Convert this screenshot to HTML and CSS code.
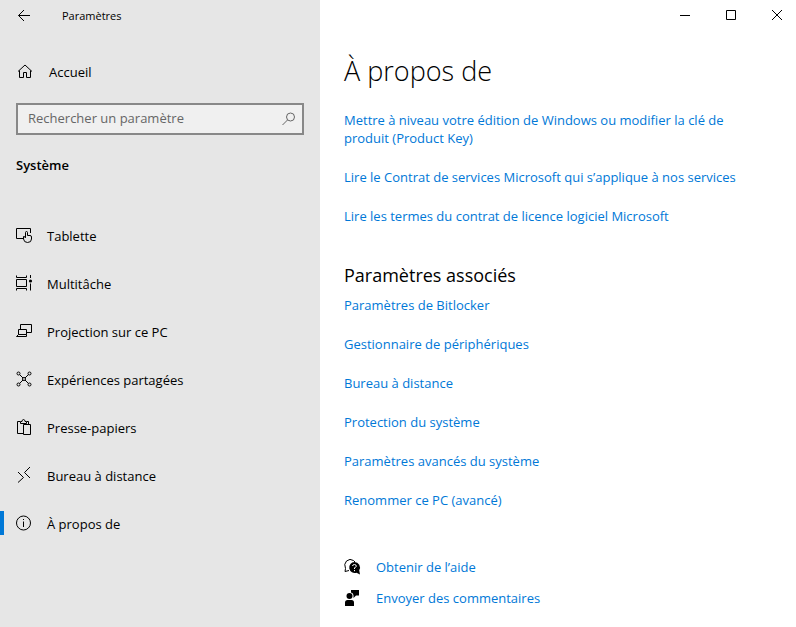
FILE: index.html
```
<!DOCTYPE html>
<html lang="fr">
	<head>
		<title>Paramètres</title>
		<meta charset="utf-8">
		<meta name="viewport" content="width=device-width, initial-scale=1">
		<link rel="stylesheet" href="styles.css">
	</head>
	<body>
		<div class="window">
			<aside class="sidebar">
				<header class="topbar">
					<button class="back" type="button" aria-label="Retour">
						<svg class="icon" viewBox="0 0 16 16"><path d="M14 7.500H2.500M8 2L2.500 7.500L8 13"/></svg>
					</button>
					<span class="apptitle">Paramètres</span>
				</header>
				<a class="item home" href="#">
					<svg class="icon" viewBox="0 0 16 16"><path d="M2 8.500L9 2L16 8.500M3.500 7.500V14.500H7.500V9.500H10.500V14.500H14.500V7.500"/></svg>
					<span>Accueil</span>
				</a>
				<form class="search">
					<input class="searchbox" type="text" placeholder="Rechercher un paramètre" aria-label="Rechercher un paramètre">
					<button class="searchbutton" type="submit" aria-label="Rechercher">
						<svg class="icon" viewBox="0 0 16 16"><circle cx="10.500" cy="6" r="4"/><path d="M7.500 9L2.500 14"/></svg>
					</button>
				</form>
				<h2 class="category">Système</h2>
				<nav class="menu">
					<a class="item" href="#">
						<svg class="icon" viewBox="0 0 16 16"><path d="M7 11.500H.5V1.500H14.500V6M9.500 10.500V5.500a1 1 0 0 1 2 0V8.500h2.500q1.500 0 1.500 1.500V12q0 3.500-4 3.500Q8 15.500 7.500 12V9.500Q9.500 9.500 9.500 11"/></svg>
						<span>Tablette</span>
					</a>
					<a class="item" href="#">
						<svg class="icon" viewBox="0 0 16 16"><path d="M.5 .5V2.500H10.500V.5M.5 4.500H10.500V11.500H.5ZM.5 15.500V13.500H10.500V15.500M14.500 0V3M14.500 8.500V15.500"/><circle class="fill" cx="14.500" cy="6" r="1.600"/></svg>
						<span>Multitâche</span>
					</a>
					<a class="item" href="#">
						<svg class="icon" viewBox="0 0 16 16"><path d="M4.500 6V1.500H15.500V9.500H11M2.500 11.500V6.500H10.500V11.500M2.500 11.500L.5 13.500H10.500V11.500Z"/></svg>
						<span>Projection sur ce PC</span>
					</a>
					<a class="item" href="#">
						<svg class="icon" viewBox="0 0 16 16"><circle cx="2.500" cy="2.500" r="1.500"/><circle cx="13.500" cy="2.500" r="1.500"/><circle cx="2.500" cy="13.500" r="1.500"/><circle cx="13.500" cy="13.500" r="1.500"/><circle cx="8" cy="8" r="1.500"/><path d="M3.600 3.600L7 7M12.400 3.600L9 7M3.600 12.400L7 9M12.400 12.400L9 9"/></svg>
						<span>Expériences partagées</span>
					</a>
					<a class="item" href="#">
						<svg class="icon" viewBox="0 0 16 16"><path d="M7 14.500H1.500V2.500H4M11 2.500H12.500V5M4.500 4.500V2.500H6V1.500Q7.500-.5 9 1.500V2.500H10.500V4.500ZM7.500 5.500H14.500V15.500H7.500Z"/></svg>
						<span>Presse-papiers</span>
					</a>
					<a class="item" href="#">
						<svg class="icon" viewBox="0 0 16 16"><path d="M14 0L8.500 5.500L14 11M2 5L7.500 10.500L2 15.500"/></svg>
						<span>Bureau à distance</span>
					</a>
					<a class="item current" href="#" aria-current="page">
						<svg class="icon" viewBox="0 0 16 16"><circle cx="7.500" cy="8" r="7"/><path d="M7.500 6.500V12M7.500 4V5"/></svg>
						<span>À propos de</span>
					</a>
				</nav>
			</aside>
			<main class="content">
				<div class="controls">
					<button class="control" type="button" aria-label="Réduire">
						<svg viewBox="0 0 10 10"><path d="M0 5.500H10"/></svg>
					</button>
					<button class="control" type="button" aria-label="Agrandir">
						<svg viewBox="0 0 10 10"><path d="M.5 .5H9.500V9.500H.5Z"/></svg>
					</button>
					<button class="control" type="button" aria-label="Fermer">
						<svg viewBox="0 0 10 10"><path d="M0 0L10 10M10 0L0 10"/></svg>
					</button>
				</div>
				<div class="page">
					<h1 class="title">À propos de</h1>
					<div class="links">
						<a href="#">Mettre à niveau votre édition de Windows ou modifier la clé de produit (Product Key)</a>
						<a href="#">Lire le Contrat de services Microsoft qui s’applique à nos services</a>
						<a href="#">Lire les termes du contrat de licence logiciel Microsoft</a>
					</div>
					<h2 class="subtitle">Paramètres associés</h2>
					<div class="links">
						<a href="#">Paramètres de Bitlocker</a>
						<a href="#">Gestionnaire de périphériques</a>
						<a href="#">Bureau à distance</a>
						<a href="#">Protection du système</a>
						<a href="#">Paramètres avancés du système</a>
						<a href="#">Renommer ce PC (avancé)</a>
					</div>
					<div class="help">
						<a href="#">
							<svg class="icon" viewBox="0 0 16 16"><path d="M1 12.500L1.500 9.500Q-.5 5 2.500 2Q6-1 9.500 1.500L11 3M1 12.500L5 11.500"/><path class="fill" d="M10.500 3a5.500 5.500 0 0 1 4.700 8.300L16 15.500L12.500 13.700A5.500 5.500 0 1 1 10.500 3Z"/><path class="mark" d="M8.500 7Q8.700 5.500 10.500 5.500Q12.500 5.700 12.300 7.300Q12 8.300 10.500 8.800V10M10.500 11V12.200"/></svg>
							<span>Obtenir de l’aide</span>
						</a>
						<a href="#">
							<svg class="icon" viewBox="0 0 16 16"><path class="fill" d="M7 0H15V5.500H12L9.500 8V5.500Q9.500 3 7 2.500Z"/><circle class="fill" cx="5.500" cy="6" r="3"/><path class="fill" d="M1 16V12.500Q1 10 3.500 10H7.500Q10 10 10 12.500V16Z"/></svg>
							<span>Envoyer des commentaires</span>
						</a>
					</div>
				</div>
			</main>
		</div>
	</body>
</html>
```
FILE: styles.css
```
* {
	box-sizing: border-box;
}

body {
	margin: 0;
	background-color: white;
	color: black;
	font-family: "Open Sans", "Noto Sans", sans-serif;
	font-size: 13px;
	line-height: 18px;
}

a {
	color: #0078d7;
	text-decoration: none;
}

button {
	padding: 0;
	border: none;
	background: none;
	color: inherit;
}

svg {
	display: block;
	fill: none;
	stroke: currentColor;
}

.window {
	display: flex;
	min-height: 100vh;
}

.sidebar {
	width: 320px;
	flex: none;
	background-color: #e6e6e6;
}

.topbar {
	display: flex;
	align-items: center;
	height: 32px;
}

.back {
	display: flex;
	align-items: center;
	width: 62px;
	height: 32px;
	padding-left: 16px;
}

.apptitle {
	font-size: 11px;
}

.icon {
	width: 16px;
	height: 16px;
	flex: none;
	overflow: visible;
}

.fill {
	fill: currentColor;
	stroke: none;
}

.mark {
	stroke: white;
}

.item {
	display: flex;
	align-items: center;
	gap: 15px;
	height: 48px;
	padding-left: 16px;
	color: black;
}

.item .icon {
	margin-bottom: 2px;
}

.home {
	gap: 17px;
	margin-top: 16px;
}

.search {
	display: flex;
	height: 32px;
	margin: 7px 16px 0;
	border: 2px solid #888;
	background-color: #f0f0f0;
	color: #666;
}

.searchbox {
	flex: 1;
	min-width: 0;
	padding: 0 10px 2px;
	border: none;
	outline: none;
	background: none;
	font: inherit;
}

.searchbox::placeholder {
	color: #666;
	opacity: 1;
}

.searchbutton {
	display: flex;
	align-items: center;
	justify-content: center;
	width: 28px;
}

.category {
	margin: 21px 16px 38px;
	font-size: 13px;
	font-weight: 600;
}

.current {
	background: linear-gradient(#0078d7, #0078d7) left 11px / 4px 24px no-repeat;
}

.content {
	flex: 1;
	min-width: 0;
}

.controls {
	display: flex;
	justify-content: flex-end;
	gap: 36px;
	height: 30px;
	padding-right: 14px;
}

.control {
	display: flex;
	align-items: center;
	width: 10px;
}

.control svg {
	width: 10px;
	height: 10px;
}

.page {
	padding: 23px 40px 23px 24px;
}

.title {
	margin: 0 0 22px;
	font-size: 27px;
	font-weight: 300;
	line-height: 36px;
}

.links {
	display: flex;
	flex-direction: column;
	align-items: flex-start;
	gap: 21px;
}

.subtitle {
	margin: 38px 0 9px;
	font-size: 18px;
	font-weight: 400;
	line-height: 24px;
}

.help {
	display: flex;
	flex-direction: column;
	align-items: flex-start;
	gap: 13px;
	margin-top: 49px;
}

.help a {
	display: flex;
	align-items: center;
	gap: 16px;
}

.help svg {
	color: black;
}
```
